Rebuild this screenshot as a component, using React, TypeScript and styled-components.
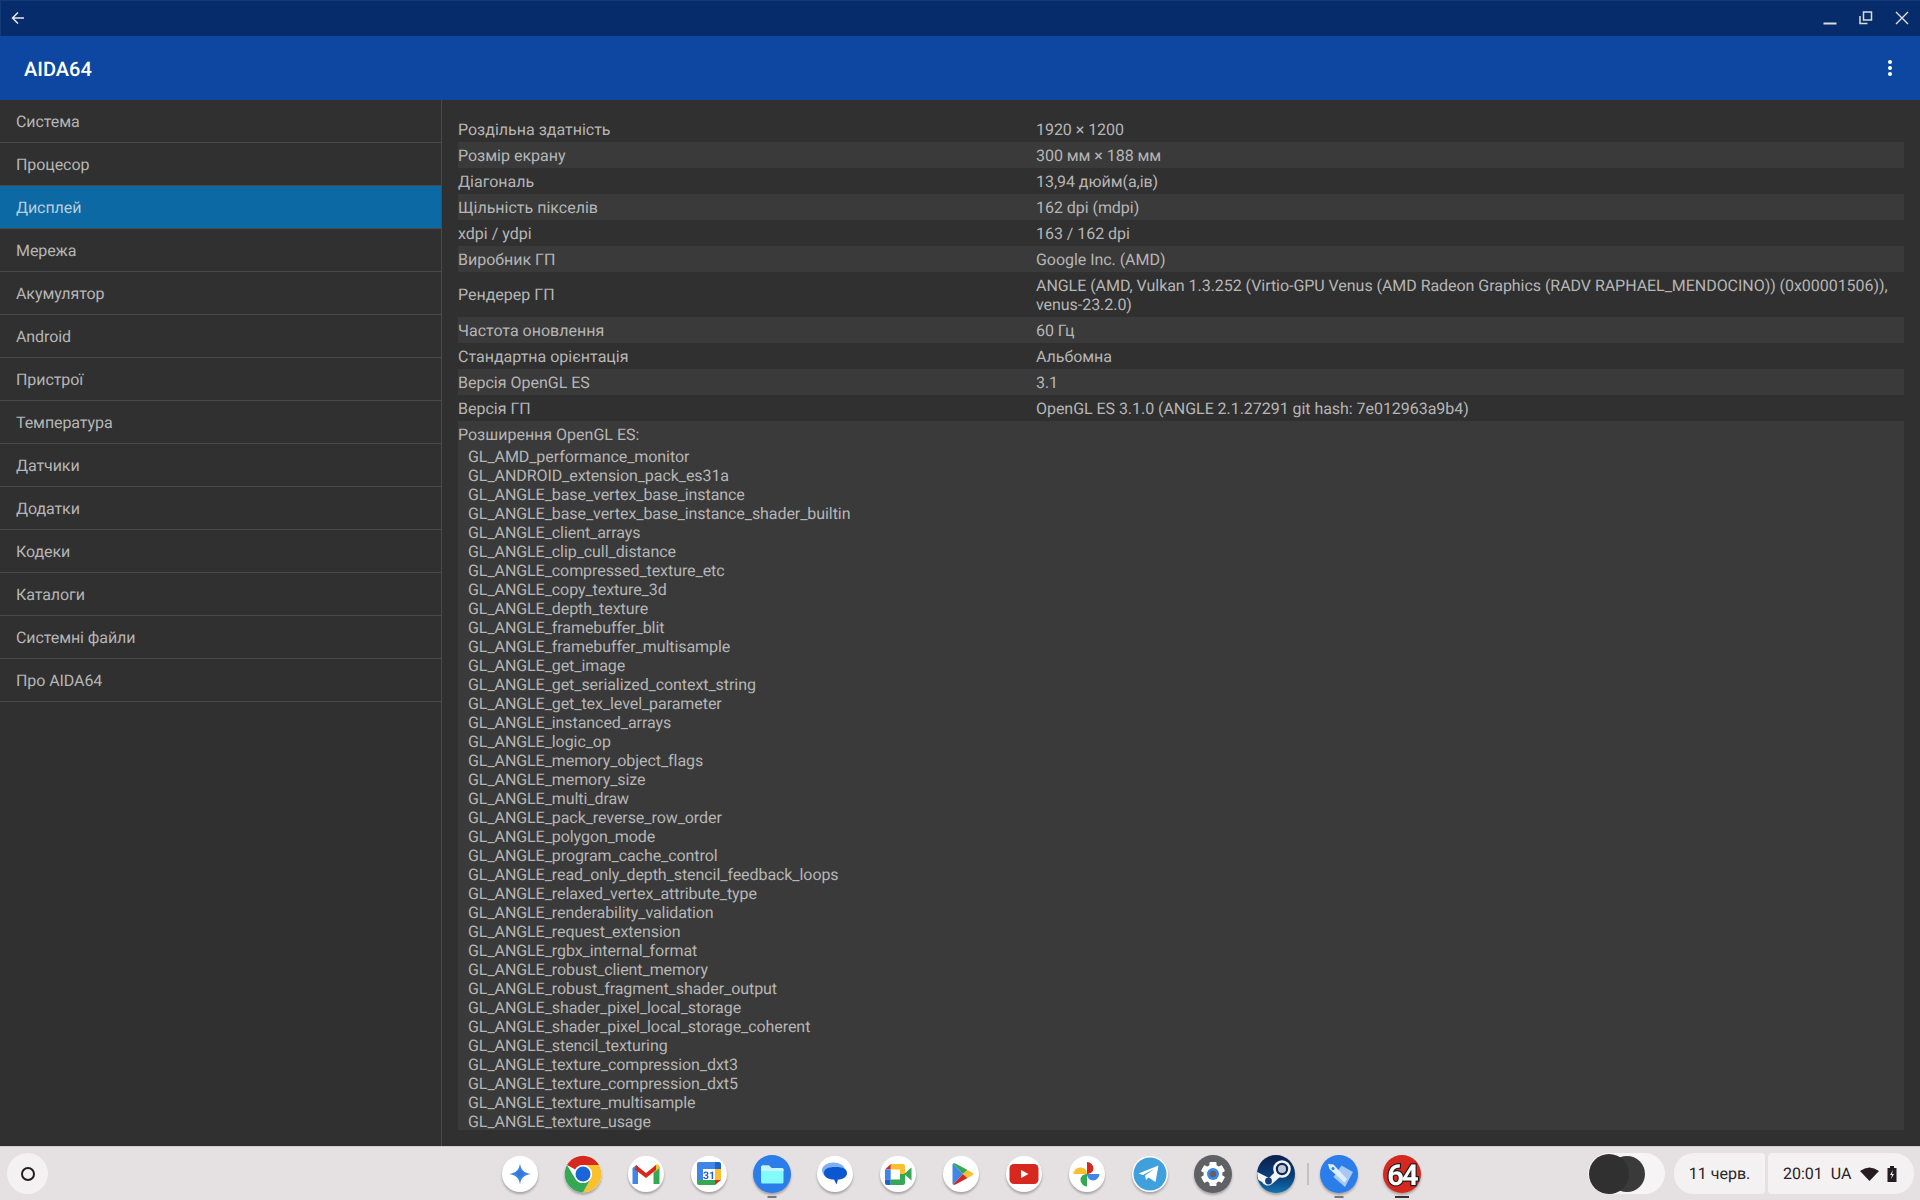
import { ReactNode } from 'react';
import styled, { createGlobalStyle } from 'styled-components';

const menu: string[] = ['Система', 'Процесор', 'Дисплей', 'Мережа', 'Акумулятор', 'Android', 'Пристрої', 'Температура', 'Датчики', 'Додатки', 'Кодеки', 'Каталоги', 'Системні файли', 'Про AIDA64'];

const info: Array<[string, string]> = [
    ['Роздільна здатність', '1920 × 1200'],
    ['Розмір екрану', '300 мм × 188 мм'],
    ['Діагональ', '13,94 дюйм(а,ів)'],
    ['Щільність пікселів', '162 dpi (mdpi)'],
    ['xdpi / ydpi', '163 / 162 dpi'],
    ['Виробник ГП', 'Google Inc. (AMD)'],
    ['Рендерер ГП', 'ANGLE (AMD, Vulkan 1.3.252 (Virtio-GPU Venus (AMD Radeon Graphics (RADV RAPHAEL_MENDOCINO)) (0x00001506)), venus-23.2.0)'],
    ['Частота оновлення', '60 Гц'],
    ['Стандартна орієнтація', 'Альбомна'],
    ['Версія OpenGL ES', '3.1'],
    ['Версія ГП', 'OpenGL ES 3.1.0 (ANGLE 2.1.27291 git hash: 7e012963a9b4)'],
];

const extensions: string[] = [
    'GL_AMD_performance_monitor', 'GL_ANDROID_extension_pack_es31a', 'GL_ANGLE_base_vertex_base_instance',
    'GL_ANGLE_base_vertex_base_instance_shader_builtin', 'GL_ANGLE_client_arrays', 'GL_ANGLE_clip_cull_distance',
    'GL_ANGLE_compressed_texture_etc', 'GL_ANGLE_copy_texture_3d', 'GL_ANGLE_depth_texture', 'GL_ANGLE_framebuffer_blit',
    'GL_ANGLE_framebuffer_multisample', 'GL_ANGLE_get_image', 'GL_ANGLE_get_serialized_context_string',
    'GL_ANGLE_get_tex_level_parameter', 'GL_ANGLE_instanced_arrays', 'GL_ANGLE_logic_op', 'GL_ANGLE_memory_object_flags',
    'GL_ANGLE_memory_size', 'GL_ANGLE_multi_draw', 'GL_ANGLE_pack_reverse_row_order', 'GL_ANGLE_polygon_mode',
    'GL_ANGLE_program_cache_control', 'GL_ANGLE_read_only_depth_stencil_feedback_loops', 'GL_ANGLE_relaxed_vertex_attribute_type',
    'GL_ANGLE_renderability_validation', 'GL_ANGLE_request_extension', 'GL_ANGLE_rgbx_internal_format', 'GL_ANGLE_robust_client_memory',
    'GL_ANGLE_robust_fragment_shader_output', 'GL_ANGLE_shader_pixel_local_storage', 'GL_ANGLE_shader_pixel_local_storage_coherent',
    'GL_ANGLE_stencil_texturing', 'GL_ANGLE_texture_compression_dxt3', 'GL_ANGLE_texture_compression_dxt5',
    'GL_ANGLE_texture_multisample', 'GL_ANGLE_texture_usage',
];

const GlobalStyle = createGlobalStyle`
    html, body {
        margin: 0;
        padding: 0;
        background: #303030;
        font-family: Roboto, "Noto Sans", sans-serif;
        text-rendering: geometricPrecision;
    }
`;

const Screen = styled.div`
    display: grid;
    grid-template-rows: 36px 64px 1046px 54px;
    width: 1920px;
    height: 1200px;
    overflow: hidden;
`;

const TitleBar = styled.div`
    display: flex;
    align-items: center;
    justify-content: space-between;
    background: #072c6b;
    border-top: 1px solid #123a78;
    border-left: 1px solid #123a78;
    box-sizing: border-box;
    padding: 0 11px 2px 10px;
    color: #e8e8e8;
`;

const WindowButtons = styled.div`
    display: flex;
    align-items: center;
    gap: 22px;
`;

const Toolbar = styled.div`
    display: flex;
    align-items: center;
    justify-content: space-between;
    background: #0d47a1;
    padding: 0 28px 0 24px;
`;

const AppTitle = styled.div`
    margin-top: 2px;
    color: #fff;
    font-size: 20px;
    font-weight: 500;
`;

const Dots = styled.div`
    display: flex;
    flex-direction: column;
    gap: 2px;
    & > i {
        display: block;
        width: 4px;
        height: 4px;
        border-radius: 50%;
        background: #fff;
    }
`;

const Body = styled.div`
    display: grid;
    grid-template-columns: 441px 1fr;
    min-height: 0;
    background: #303030;
`;

const Sidebar = styled.div`
    border-right: 1px solid #4a4a4a;
    box-sizing: content-box;
    width: 441px;
`;

const MenuItem = styled.div<{ $active?: boolean }>`
    display: flex;
    align-items: center;
    box-sizing: border-box;
    height: 43px;
    padding: 1px 16px 0;
    font-size: 16px;
    letter-spacing: -0.08px;
    color: ${props => (props.$active ? '#b9cfdf' : '#b6b6b6')};
    background: ${props => (props.$active ? '#0d69a3' : 'transparent')};
    border-bottom: 1px solid #4a4a4a;
`;

const Content = styled.div`
    margin-left: 1px;
    padding: 16px 16px 0;
    overflow: hidden;
    font-size: 16px;
    color: #b6b6b6;
`;

const InfoRow = styled.div<{ $light: boolean }>`
    display: grid;
    grid-template-columns: 578px 1fr;
    align-items: center;
    padding: 3.5px 0;
    line-height: 19px;
    background: ${props => (props.$light ? '#3a3a3a' : 'transparent')};
`;

const InfoValue = styled.span`
    letter-spacing: -0.045px;
`;

const ExtensionBlock = styled.div`
    background: #3a3a3a;
    padding: 4px 0 0;
    height: 705px;
    line-height: 19px;
`;

const ExtensionList = styled.div`
    margin-top: 3px;
    padding-left: 10px;
    letter-spacing: -0.07px;
`;

const Shelf = styled.div`
    display: flex;
    align-items: center;
    background: #e5e1e3;
    border-top: 1px solid #d2cfd1;
    box-sizing: border-box;
    padding: 0 6px 0 7px;
`;

const Launcher = styled.div`
    display: flex;
    align-items: center;
    justify-content: center;
    width: 41px;
    height: 41px;
    border-radius: 50%;
    background: #f3f1f2;
    margin-right: 453px;
`;

const AppIcons = styled.div`
    display: flex;
    align-items: center;
    gap: 25px;
`;

const AppButton = styled.div`
    position: relative;
    width: 38px;
    height: 38px;
    margin-top: 1px;
    border-radius: 50%;
    & > svg {
        display: block;
        filter: drop-shadow(0 2px 1px rgba(0, 0, 0, 0.28));
    }
`;

const RunningMark = styled.span<{ $dark?: boolean }>`
    position: absolute;
    left: 50%;
    bottom: -5px;
    width: ${props => (props.$dark ? '14px' : '9px')};
    height: 2px;
    transform: translateX(-50%);
    background: ${props => (props.$dark ? '#333' : '#777')};
`;

const Separator = styled.div`
    width: 2px;
    height: 22px;
    margin: 0 -13.5px;
    background: #c4c1c3;
`;

const Tray = styled.div`
    display: flex;
    align-items: center;
    margin-left: auto;
    color: #2a2226;
    font-size: 16px;
`;

const ThemePill = styled.div`
    width: 77px;
    height: 41px;
    margin-right: 9px;
    border-radius: 21px;
    background: #f6f4f5;
    overflow: hidden;
    & > svg {
        display: block;
    }
`;

const DatePill = styled.div`
    display: flex;
    align-items: center;
    justify-content: center;
    width: 91px;
    height: 41px;
    margin-right: 3px;
    background: #f3f1f2;
    border-radius: 20px 4px 4px 20px;
`;

const TimePill = styled.div`
    display: flex;
    align-items: center;
    box-sizing: border-box;
    width: 146px;
    height: 41px;
    padding-left: 15px;
    background: #f3f1f2;
    border-radius: 4px 20px 20px 4px;
`;

const Clock = styled.span`
    margin-right: 8px;
`;

const Region = styled.span`
    margin-right: 9px;
`;

const BatteryIcon = styled.svg`
    margin-left: 8px;
`;

const WhiteDisc = () => <circle cx="19" cy="19" r="18" fill="#fff" />;

const Icon = ({ children }: { children: ReactNode }) => (
    <svg width="38" height="38" viewBox="0 0 38 38">{children}</svg>
);

const GeminiIcon = () => (
    <Icon>
        <defs>
            <radialGradient id="gemini">
                <stop offset="0" stopColor="#2f74d8" />
                <stop offset="1" stopColor="#4d95ee" />
            </radialGradient>
        </defs>
        <WhiteDisc />
        <path d="M19 8.5 C20 15 23 18 30 19 C23 20 20 23 19 29.5 C18 23 15 20 8 19 C15 18 18 15 19 8.5Z" fill="url(#gemini)" />
    </Icon>
);

const ChromeIcon = () => (
    <Icon>
        <circle cx="19" cy="19" r="18.5" fill="#fff" />
        <path d="M3 10 A18.5 18.5 0 0 1 35 10 H19 A9 9 0 0 0 11.2 14.5Z" fill="#d7281f" />
        <path d="M35 10 A18.5 18.5 0 0 1 19 37.5 L26.8 23.5 A9 9 0 0 0 19 10Z" fill="#fbc02d" />
        <path d="M3 10 L11.2 23.5 A9 9 0 0 0 26.8 23.5 L19 37.5 A18.5 18.5 0 0 1 3 10Z" fill="#34a853" />
        <circle cx="19" cy="19" r="9" fill="#fff" />
        <circle cx="19" cy="19" r="7.5" fill="#1a66d8" />
    </Icon>
);

const GmailIcon = () => (
    <Icon>
        <WhiteDisc />
        <path d="M5.5 13 L9.5 10 L11 12 V29 H5.5Z" fill="#3f86e8" />
        <path d="M26.5 12 L30 9.5 L32.5 12 V29 H26.5Z" fill="#34a853" />
        <path d="M29 9.5 A3 3 0 0 1 32.5 13 L26.5 18 V12Z" fill="#fbc02d" />
        <path d="M9 10 L19 18 L29 10 L29 15 L19 23 L8 14.5Z" fill="#d7281f" />
    </Icon>
);

const CalendarIcon = () => (
    <Icon>
        <WhiteDisc />
        <rect x="7" y="7" width="24" height="23" rx="2" fill="#fff" />
        <path d="M9 7 H25 V14 H13 V25 H7 V9 A2 2 0 0 1 9 7Z" fill="#3f86e8" />
        <path d="M25 7 H29 A2 2 0 0 1 31 9 V14 H25Z" fill="#1f62c8" />
        <rect x="25" y="14" width="6" height="11" fill="#fbc02d" />
        <path d="M7 25 H25 V30 H9 A2 2 0 0 1 7 28Z" fill="#34a853" />
        <path d="M25 25 H31 L25 30Z" fill="#d7281f" />
        <text x="19" y="24" textAnchor="middle" fontSize="10.5" fontWeight="700" fontFamily="Roboto, sans-serif" fill="#1f62c8">31</text>
    </Icon>
);

const FilesIcon = () => (
    <Icon>
        <circle cx="19" cy="19" r="19" fill="#2b7de9" />
        <path d="M8 12 A1.5 1.5 0 0 1 9.5 10.5 H16 L18.5 13 H29 A1.5 1.5 0 0 1 30.5 14.5 V27 A1.5 1.5 0 0 1 29 28.5 H9.5 A1.5 1.5 0 0 1 8 27Z" fill="#84fbfb" />
        <path d="M8 12 A1.5 1.5 0 0 1 9.5 10.5 H16 L18.5 13 H29 A1.5 1.5 0 0 1 30.5 14.5 V16 H8Z" fill="#c7f3fb" />
    </Icon>
);

const MessagesIcon = () => (
    <Icon>
        <WhiteDisc />
        <ellipse cx="17.5" cy="15.5" rx="11.5" ry="8" fill="#7fb0f2" />
        <path d="M8 18 C8 14 12 12 19.5 12 C27 12 31 14 31 18 C31 22 27 24.5 22 24.5 L20.5 29.5 L18 24.5 C12 24.5 8 22 8 18Z" fill="#0b57d0" />
    </Icon>
);

const MeetIcon = () => (
    <Icon>
        <WhiteDisc />
        <path d="M11.7 9 H24 A2 2 0 0 1 26 11 V19 H21 V14.6 H11.7Z" fill="#fbc02d" />
        <path d="M11.7 9 V14.6 H6Z" fill="#d7281f" />
        <rect x="6" y="14.6" width="5.7" height="10" fill="#3f86e8" />
        <path d="M6 24.6 H11.7 V30 H8 A2 2 0 0 1 6 28Z" fill="#1f62c8" />
        <path d="M11.7 24.6 H21 V19 H26 V28 A2 2 0 0 1 24 30 H11.7Z" fill="#34a853" />
        <path d="M25 19 L32.5 12.5 V25.5Z" fill="#34a853" />
    </Icon>
);

const PlayIcon = () => (
    <Icon>
        <WhiteDisc />
        <path d="M11 8.5 L21 19 L11 29.5 A1.5 1.5 0 0 1 10.5 28 V10 A1.5 1.5 0 0 1 11 8.5Z" fill="#3f86e8" />
        <path d="M11 8.5 C12 8 13 8.2 14 8.8 L25.5 15 L21 19Z" fill="#34a853" />
        <path d="M11 29.5 C12 30 13 29.8 14 29.2 L25.5 23 L21 19Z" fill="#d7281f" />
        <path d="M25.5 15 L30.5 17.8 C31.5 18.5 31.5 19.5 30.5 20.2 L25.5 23 L21 19Z" fill="#fbc02d" />
    </Icon>
);

const YoutubeIcon = () => (
    <Icon>
        <WhiteDisc />
        <rect x="4.5" y="9" width="29" height="20" rx="4.5" fill="#d7281f" />
        <path d="M16 15 L23.5 19 L16 23Z" fill="#fff" />
    </Icon>
);

const PhotosIcon = () => (
    <Icon>
        <WhiteDisc />
        <path d="M19 7 A6.5 6.5 0 0 1 25.5 13.5 A6 6 0 0 1 19 19Z" fill="#d7281f" />
        <path d="M31.5 19 A6.5 6.5 0 0 1 25 25.5 A6 6 0 0 1 19 19Z" fill="#3f86e8" />
        <path d="M19 31.5 A6.5 6.5 0 0 1 12.5 25 A6 6 0 0 1 19 19Z" fill="#34a853" />
        <path d="M5.5 19 A6.5 6.5 0 0 1 12 12.5 A6 6 0 0 1 19 19Z" fill="#fbc02d" />
    </Icon>
);

const TelegramIcon = () => (
    <Icon>
        <circle cx="19" cy="19" r="18" fill="#fff" />
        <circle cx="19" cy="19" r="16.5" fill="#40a0dd" />
        <path d="M7.5 18.5 L27.5 10.5 L24.5 27 L17.5 22.5 L15 25 L14 20.5 L24 13.5 L12 20Z" fill="#fff" />
    </Icon>
);

const SettingsIcon = () => (
    <Icon>
        <circle cx="19" cy="19" r="19" fill="#5f6164" />
        <g fill="#fff">
            <circle cx="19" cy="19" r="9.5" />
            {[0, 60, 120, 180, 240, 300].map(angle => (
                <rect key={angle} x="15.5" y="7" width="7" height="6" rx="1" transform={`rotate(${angle} 19 19)`} />
            ))}
        </g>
        <circle cx="19" cy="19" r="6" fill="#3f86e8" />
        <circle cx="19" cy="19" r="3.2" fill="#5f6164" />
    </Icon>
);

const SteamIcon = () => (
    <Icon>
        <defs>
            <linearGradient id="steam" x1="0" y1="0" x2="0" y2="1">
                <stop offset="0" stopColor="#0b1f4b" />
                <stop offset="0.55" stopColor="#0a3c78" />
                <stop offset="1" stopColor="#1173b0" />
            </linearGradient>
        </defs>
        <circle cx="19" cy="19" r="19" fill="url(#steam)" />
        <path d="M0.3 17 L12 23 L20 15 L24 21 L15 29 A6.5 6.5 0 0 1 5 27 L1.5 25 A19 19 0 0 1 0.3 17Z" fill="#f2f4f6" />
        <circle cx="25" cy="14" r="7.5" fill="#0b2a5c" stroke="#f2f4f6" strokeWidth="2.6" />
        <circle cx="25" cy="14" r="4" fill="#bfc8d4" />
        <circle cx="11.5" cy="26" r="3.4" fill="#123f7a" />
    </Icon>
);

const RocketIcon = () => (
    <Icon>
        <circle cx="19" cy="19" r="19" fill="#2b7de9" />
        <path d="M21.5 10.5 L33 17 L25 32 L13.5 22Z" fill="#a6c8f2" />
        <path d="M8 9 L13.5 9.5 L27 24 L24.5 27.5 L9.5 14Z" fill="#dfeeff" />
        <circle cx="13" cy="13.5" r="1.5" fill="#2b7de9" />
    </Icon>
);

const SixtyFourIcon = () => (
    <Icon>
        <circle cx="19" cy="19" r="19" fill="#d7281f" />
        <text x="19" y="30" textAnchor="middle" fontSize="29" fontWeight="700" letterSpacing="-2" fontFamily="Roboto, sans-serif" fill="#fff" stroke="#1c1c1c" strokeWidth="2.4" paintOrder="stroke">64</text>
    </Icon>
);

const App = () => (
    <Screen>
        <GlobalStyle />
        <TitleBar>
            <svg width="14" height="14" viewBox="0 0 14 14" fill="none" stroke="#e8e8e8" strokeWidth="1.5">
                <path d="M13 7H1.5M7 1.5L1.5 7L7 12.5" />
            </svg>
            <WindowButtons>
                <svg width="14" height="14" viewBox="0 0 14 14" fill="none" stroke="#dcdcdc" strokeWidth="2"><path d="M0.5 12.5H13.5" /></svg>
                <svg width="14" height="14" viewBox="0 0 14 14" fill="none" stroke="#dcdcdc" strokeWidth="1.5"><path d="M4.5 1H12.5V9H4.5ZM1 5V12.5H8.5" /></svg>
                <svg width="14" height="14" viewBox="0 0 14 14" fill="none" stroke="#e0e0e0" strokeWidth="1.4"><path d="M1 1L13 13M13 1L1 13" /></svg>
            </WindowButtons>
        </TitleBar>
        <Toolbar>
            <AppTitle>AIDA64</AppTitle>
            <Dots><i /><i /><i /></Dots>
        </Toolbar>
        <Body>
            <Sidebar>
                {menu.map((item: string) => <MenuItem key={item} $active={item === 'Дисплей'}>{item}</MenuItem>)}
            </Sidebar>
            <Content>
                {info.map(([label, value], index) => (
                    <InfoRow key={label} $light={index % 2 === 1}>
                        <span>{label}</span>
                        <InfoValue>{value}</InfoValue>
                    </InfoRow>
                ))}
                <ExtensionBlock>
                    Розширення OpenGL ES:
                    <ExtensionList>
                        {extensions.map((item: string) => <div key={item}>{item}</div>)}
                    </ExtensionList>
                </ExtensionBlock>
            </Content>
        </Body>
        <Shelf>
            <Launcher>
                <svg width="16" height="16" viewBox="0 0 16 16" fill="none" stroke="#241c20" strokeWidth="2"><circle cx="8" cy="8" r="6" /></svg>
            </Launcher>
            <AppIcons>
                <AppButton><GeminiIcon /></AppButton>
                <AppButton><ChromeIcon /></AppButton>
                <AppButton><GmailIcon /></AppButton>
                <AppButton><CalendarIcon /></AppButton>
                <AppButton><FilesIcon /><RunningMark /></AppButton>
                <AppButton><MessagesIcon /></AppButton>
                <AppButton><MeetIcon /></AppButton>
                <AppButton><PlayIcon /></AppButton>
                <AppButton><YoutubeIcon /></AppButton>
                <AppButton><PhotosIcon /></AppButton>
                <AppButton><TelegramIcon /></AppButton>
                <AppButton><SettingsIcon /></AppButton>
                <AppButton><SteamIcon /></AppButton>
                <Separator />
                <AppButton><RocketIcon /><RunningMark /></AppButton>
                <AppButton><SixtyFourIcon /><RunningMark $dark /></AppButton>
            </AppIcons>
            <Tray>
                <ThemePill>
                    <svg width="77" height="41" viewBox="0 0 77 41">
                        <circle cx="39" cy="21" r="18" fill="#3a3a3a" />
                        <circle cx="21" cy="21" r="20" fill="#303030" />
                    </svg>
                </ThemePill>
                <DatePill>11 черв.</DatePill>
                <TimePill>
                    <Clock>20:01</Clock>
                    <Region>UA</Region>
                    <svg width="19" height="14" viewBox="0 0 19 14" fill="#241c20"><path d="M0 4 Q9.5 -3 19 4 L9.5 14Z" /></svg>
                    <BatteryIcon width="10" height="16" viewBox="0 0 10 16" fill="#241c20">
                        <path d="M3 0H7V2H9.5V16H0.5V2H3Z" />
                        <path d="M6 4L3 9H5L4 13L7 8H5Z" fill="#f3f1f2" />
                    </BatteryIcon>
                </TimePill>
            </Tray>
        </Shelf>
    </Screen>
);

export default App;
